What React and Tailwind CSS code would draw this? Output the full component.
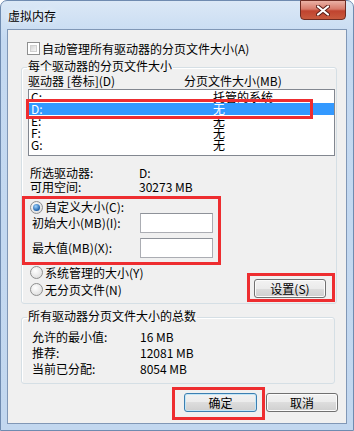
import { useState } from "react";

const drives = [
  { name: "C:", size: "托管的系统" },
  { name: "D:", size: "无" },
  { name: "E:", size: "无" },
  { name: "F:", size: "无" },
  { name: "G:", size: "无" },
];

const CheckBox = () => (
  <span className="w-[13px] h-[13px] shrink-0 border border-[#8e8f8f] bg-white p-[2px]">
    <span className="block w-full h-full border border-[#d0d0d0] bg-[linear-gradient(135deg,#d6d6d6,#f7f7f7)]" />
  </span>
);

const Radio = ({ checked }) => (
  <span className="w-[13px] h-[13px] shrink-0 rounded-full border border-[#8e8f8f] bg-[radial-gradient(circle_at_40%_35%,#ffffff,#d6d6d6)] flex items-center justify-center">
    {checked && (
      <span className="w-[7px] h-[7px] rounded-full bg-[radial-gradient(circle_at_40%_35%,#9fd4ff,#1c5fa8_70%)]" />
    )}
  </span>
);

const Button = ({ children, primary, className = "" }) => (
  <button
    className={
      "h-[19px] rounded-[3px] border text-[12px] leading-[12px] bg-[linear-gradient(#f2f2f2_0%,#ebebeb_50%,#dddddd_50%,#cfcfcf_100%)] " +
      (primary
        ? "border-[#3c7fb1] shadow-[inset_0_0_0_1px_#c3e6f7] "
        : "border-[#707070] shadow-[inset_0_0_0_1px_#fbfbfb] ") +
      className
    }
  >
    {children}
  </button>
);

const RedBox = ({ className }) => (
  <span className={"absolute border-[3px] border-[#ee2d30] pointer-events-none " + className} />
);

export default function App() {
  const [selected, setSelected] = useState(1);

  return (
    <div className="w-[354px] h-[431px] flex flex-col rounded-t-[7px] border border-[#6f8bb0] bg-[linear-gradient(#dbe8f6,#c4d9f1_40px,#c2d7ef)] text-black text-[12px] leading-[12px] font-['Noto_Sans_CJK_SC','Liberation_Sans',sans-serif]">
      {/* title bar */}
      <div className="h-[28px] flex items-start justify-between shrink-0">
        <span className="ml-[7px] mt-[8px] leading-[14px] text-[12px] [text-shadow:0_0_6px_#ffffff]">虚拟内存</span>
        <div className="mr-[7px] -mt-[1px] w-[46px] h-[20px] rounded-b-[4px] border border-[#6e2b22] bg-[linear-gradient(#eab1a5_0%,#d77a6a_45%,#c0432f_55%,#c85a3e_100%)] flex items-center justify-center">
          <svg width="14" height="11" viewBox="0 0 14 11">
            <path d="M2 1.5 L12 9.5 M12 1.5 L2 9.5" stroke="#5a1d16" strokeWidth="4" strokeLinecap="round" />
            <path d="M2 1.5 L12 9.5 M12 1.5 L2 9.5" stroke="#ffffff" strokeWidth="2.2" strokeLinecap="round" />
          </svg>
        </div>
      </div>

      {/* client area */}
      <div className="mx-[6px] mb-[6px] flex-1 border border-[#8097b6] bg-[#f0f0f0] flex flex-col">
        <div className="mt-[12px] ml-[19px] flex items-center gap-[2px] h-[13px]">
          <CheckBox />
          <span>自动管理所有驱动器的分页文件大小(A)</span>
        </div>

        {/* per-drive group */}
        <fieldset className="mt-[5px] ml-[13px] mr-[9px] border border-[#d5dfe5] rounded-[3px] shadow-[inset_1px_1px_0_#ffffff]">
          <legend className="ml-[5px] px-[1px] pb-[3px] leading-[12px]">每个驱动器的分页文件大小</legend>

          <div className="ml-[6px] flex h-[12px]">
            <span className="w-[156px]">驱动器 [卷标](D)</span>
            <span>分页文件大小(MB)</span>
          </div>

          <div className="relative ml-[6px] mr-[1px] mt-[2px]">
            <div className="h-[67px] border border-[#828790] bg-white pt-[1px]">
              {drives.map((d, i) => (
                <div
                  key={d.name}
                  onClick={() => setSelected(i)}
                  className={
                    "flex h-[12px] leading-[12px] " +
                    (i === selected ? "bg-[#3399ff] text-white" : "")
                  }
                >
                  <span className="w-[184px] pl-[2px]">{d.name}</span>
                  <span>{d.size}</span>
                </div>
              ))}
            </div>
            <RedBox className="-left-[2px] top-[10px] w-[287px] h-[20px]" />
          </div>

          <div className="ml-[8px] mt-[11px] grid grid-cols-[109px_1fr] gap-y-[2px] leading-[12px]">
            <span>所选驱动器:</span>
            <span>D:</span>
            <span>可用空间:</span>
            <span>30273 MB</span>
          </div>

          <div className="mt-[3px] w-[199px] h-[69px] border-[3px] border-[#ee2d30] pt-[2px]">
            <div className="pl-[5px] h-[12px] flex items-center gap-[2px]">
              <Radio checked />
              <span>自定义大小(C):</span>
            </div>
            <div className="pl-[7px] h-[20px] flex items-center">
              <span className="w-[108px]">初始大小(MB)(I):</span>
              <span className="w-[73px] h-[20px] bg-white border border-[#abadb3] border-t-[#8e9299]" />
            </div>
            <div className="pl-[7px] mt-[5px] h-[20px] flex items-center">
              <span className="w-[108px]">最大值(MB)(X):</span>
              <span className="w-[73px] h-[20px] bg-white border border-[#abadb3] border-t-[#8e9299]" />
            </div>
          </div>

          <div className="flex h-[38px]">
            <div className="ml-[8px] pt-[1px] flex flex-col gap-[4px]">
              <div className="h-[13px] flex items-center gap-[2px]">
                <Radio />
                <span>系统管理的大小(Y)</span>
              </div>
              <div className="h-[13px] flex items-center gap-[2px]">
                <Radio />
                <span>无分页文件(N)</span>
              </div>
            </div>
            <div className="relative ml-auto mr-[10px] mt-[14px] h-[19px]">
              <Button className="w-[72px]">设置(S)</Button>
              <RedBox className="-left-[7px] -top-[6px] w-[88px] h-[29px]" />
            </div>
          </div>
        </fieldset>

        {/* totals group */}
        <fieldset className="mt-[6px] ml-[13px] mr-[11px] border border-[#d5dfe5] rounded-[3px] shadow-[inset_1px_1px_0_#ffffff] pb-[6px]">
          <legend className="ml-[5px] px-[1px] pb-[3px] leading-[12px]">所有驱动器分页文件大小的总数</legend>
          <div className="ml-[10px] mt-[4px] grid grid-cols-[108px_1fr] leading-[16px]">
            <span>允许的最小值:</span>
            <span>16 MB</span>
            <span>推荐:</span>
            <span>12081 MB</span>
            <span>当前已分配:</span>
            <span>8054 MB</span>
          </div>
        </fieldset>

        <div className="mt-[9px] mr-[8px] flex justify-end gap-[9px]">
          <div className="relative h-[19px]">
            <Button primary className="w-[73px]">确定</Button>
            <RedBox className="-left-[12px] -top-[6px] w-[93px] h-[33px]" />
          </div>
          <Button className="w-[72px]">取消</Button>
        </div>
      </div>
    </div>
  );
}
